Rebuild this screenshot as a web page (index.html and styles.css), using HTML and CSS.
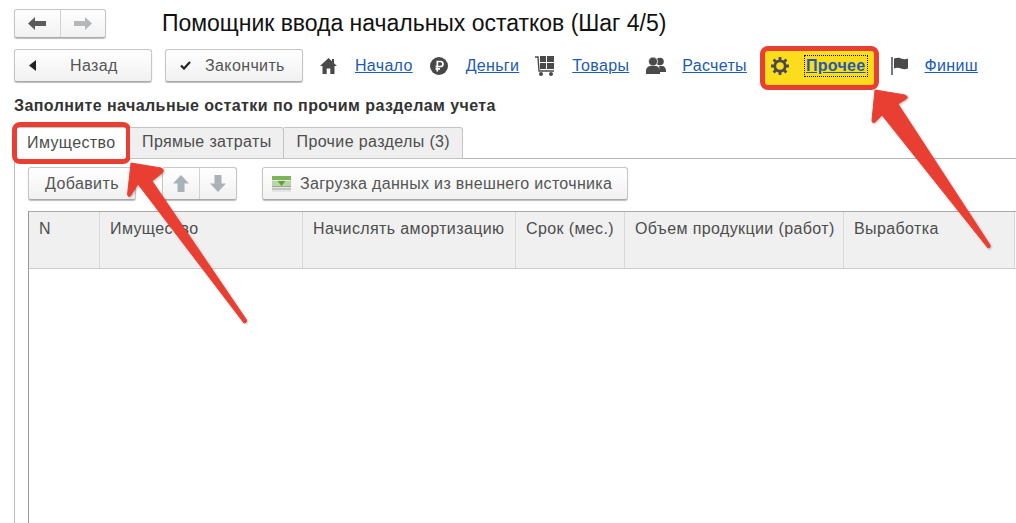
FILE: index.html
```html
<!DOCTYPE html>
<html lang="ru">
<head>
<meta charset="utf-8">
<title>Помощник ввода начальных остатков</title>
<link rel="stylesheet" href="styles.css">
</head>
<body>
<div class="page">
  <header class="title-row">
    <div class="btn-group hist">
      <span class="seg"><svg width="18" height="13" viewBox="0 0 18 13"><path d="M0 6.500 7 0V4H18V9H7V13Z" fill="#5c5c5c"/></svg></span>
      <span class="seg"><svg width="18" height="13" viewBox="0 0 18 13"><path d="M18 6.500 11 0V4H0V9H11V13Z" fill="#b4b8ba"/></svg></span>
    </div>
    <h1 class="title">Помощник ввода начальных остатков (Шаг 4/5)</h1>
  </header>

  <nav class="nav-row">
    <button class="btn wide back"><svg class="b-ico" width="7" height="11" viewBox="0 0 7 11"><path d="M7 0V11L0 5.500Z" fill="#222"/></svg><span class="back-label">Назад</span></button>
    <button class="btn wide finish"><svg class="b-ico" width="11" height="9" viewBox="0 0 11 9"><path d="M1 4.500 4 7.500 10 1" fill="none" stroke="#222" stroke-width="2.200"/></svg><span>Закончить</span></button>
    <div class="steps">
      <div class="step">
        <svg width="17" height="16" viewBox="0 0 17 16"><path d="M8.500 0 12 3.300V1H14V5.200L17 8H14.500V16H10.300V10.500H6.700V16H2.500V8H0Z" fill="#4a4a4a"/></svg>
        <a class="link" href="#">Начало</a>
      </div>
      <div class="step">
        <svg width="18" height="18" viewBox="0 0 18 18"><circle cx="9" cy="9" r="9" fill="#484848"/><path d="M7.300 14.500V4.500H10.500A2.500 2.500 0 0 1 10.500 9.500H5.500M5.500 11.800H10" fill="none" stroke="#fff" stroke-width="1.700"/></svg>
        <a class="link" href="#">Деньги</a>
      </div>
      <div class="step step-cart">
        <svg width="20" height="20" viewBox="0 0 20 20"><path d="M0 1H3L4 15H19" fill="none" stroke="#4a4a4a" stroke-width="1.400"/><path d="M5 0H11V6H5ZM12 0H19V6H12ZM5 7H11V13H5ZM12 7H19V13H12Z" fill="#4a4a4a"/><circle cx="6" cy="18" r="2" fill="#4a4a4a"/><circle cx="16" cy="18" r="2" fill="#4a4a4a"/></svg>
        <a class="link" href="#">Товары</a>
      </div>
      <div class="step step-people">
        <svg width="20" height="17" viewBox="0 0 20 17"><circle cx="14" cy="4.500" r="3.800" fill="#4a4a4a"/><path d="M13 9H16C18.500 9 20 11 20 14V15H14Z" fill="#4a4a4a"/><circle cx="7" cy="4.500" r="4.500" fill="#4a4a4a" stroke="#fff" stroke-width=".8"/><path d="M0 17V14C0 11 2 9 5 9H9C12 9 14 11 14 14V17Z" fill="#4a4a4a"/></svg>
        <a class="link" href="#">Расчеты</a>
      </div>
      <div class="step step-tight current">
        <svg width="18" height="18" viewBox="0 0 18 18"><circle cx="9" cy="9" r="5.200" fill="none" stroke="#4a4a4a" stroke-width="2.800"/><path d="M9 0V4M9 14V18M0 9H4M14 9H18M2.600 2.600 5.500 5.500M12.500 12.500 15.400 15.400M15.400 2.600 12.500 5.500M5.500 12.500 2.600 15.400" stroke="#4a4a4a" stroke-width="2.800"/></svg>
        <a class="link focus" href="#">Прочее</a>
      </div>
      <div class="step step-tight">
        <svg width="17" height="18" viewBox="0 0 17 18"><path d="M1 0V18" stroke="#4a4a4a" stroke-width="1.500"/><path d="M3 1.500C6 .5 9 .5 10 1.500 12 2.500 15 2.500 17 1.500V11.500C15 12.500 12 12.500 10 11.500 8 10.500 5 10.500 3 11.500Z" fill="#4a4a4a"/></svg>
        <a class="link" href="#">Финиш</a>
      </div>
    </div>
  </nav>

  <h2 class="subtitle">Заполните начальные остатки по прочим разделам учета</h2>

  <div class="tabs">
    <div class="tab active">Имущество</div>
    <div class="tab">Прямые затраты</div>
    <div class="tab">Прочие разделы (3)</div>
    <div class="tab-line"></div>
  </div>

  <section class="panel">
    <div class="toolbar">
      <button class="btn add">Добавить</button>
      <div class="btn-group moves">
        <span class="seg"><svg width="16" height="17" viewBox="0 0 16 17"><path d="M8 0 16 8.500H11.500V17H4.500V8.500H0Z" fill="#a8b2b8"/></svg></span>
        <span class="seg"><svg width="16" height="17" viewBox="0 0 16 17"><path d="M8 17 16 8.500H11.500V0H4.500V8.500H0Z" fill="#a8b2b8"/></svg></span>
      </div>
      <button class="btn load">
        <svg width="19" height="16" viewBox="0 0 19 16"><rect width="19" height="16" fill="#e4e6e2"/><rect width="19" height="4" fill="#7db35b"/><rect y="5" width="19" height="5" fill="#b9d7a5"/><path d="M0 10.500H19M0 13H19" stroke="#9ea39c" stroke-width="1"/><path d="M5.500 5H13.500L9.500 10Z" fill="#5fa23c"/></svg>
        <span>Загрузка данных из внешнего источника</span>
      </button>
    </div>
    <div class="grid-wrap">
      <div class="grid-head">
        <div class="cell">N</div>
        <div class="cell">Имущество</div>
        <div class="cell">Начислять амортизацию</div>
        <div class="cell">Срок (мес.)</div>
        <div class="cell">Объем продукции (работ)</div>
        <div class="cell">Выработка</div>
      </div>
    </div>
  </section>

  <svg class="arrows" width="1016" height="523" viewBox="0 0 1016 523">
    <path d="M131 163 161 168Q165 170 162 173L152 181 246.500 320Q247 323 244 323L138 184 131 195Q129 198 127.500 195Z" fill="#e93f33" stroke="#e93f33" stroke-linejoin="round"/>
    <path d="M875 90 905 95Q909 97 906 99L898 104 990 245Q991 248 988 248L882 115 875 122Q872 124 872 120Z" fill="#e93f33" stroke="#e93f33" stroke-linejoin="round"/>
  </svg>
</div>
</body>
</html>
```
FILE: styles.css
```css
* { box-sizing: border-box; }
html, body { margin: 0; padding: 0; }
body { background: #fff; font-family: "Liberation Sans", Arial, sans-serif; font-size: 16px; letter-spacing: .38px; color: #4d4d4d; }
.page { position: relative; width: 1016px; height: 523px; overflow: hidden; display: flex; flex-direction: column; }

.btn, .btn-group {
  border: 1px solid #c6c6c6;
  border-bottom-color: #a9a9a9;
  border-radius: 3px;
  background: linear-gradient(#ffffff, #f1f1f1);
  box-shadow: 0 1px 1px #bdbdbd;
}
.btn { font: inherit; letter-spacing: inherit; color: #555; padding: 0; display: flex; align-items: center; height: 33px; }
.btn-group { display: flex; }
.seg { display: flex; align-items: center; justify-content: center; }
.seg + .seg { border-left: 1px solid #d2d2d2; }

.title-row { display: flex; align-items: center; height: 30px; margin: 8px 0 0 14px; }
.hist { width: 92px; height: 29px; }
.hist .seg { width: 46px; }
.title { margin: 0 0 0 56px; font-size: 23px; letter-spacing: -.02px; font-weight: 400; color: #111; line-height: 30px; }

.nav-row { display: flex; align-items: center; height: 33px; margin: 11px 0 0 14px; }
.wide { width: 138px; }
.finish { margin-left: 13px; }
.b-ico { margin-left: 14px; flex: none; }
.back-label { margin-left: 34px; }
.finish span { margin-left: 14px; }

.steps { display: flex; align-items: center; margin-left: 17px; gap: 17px; }
.step { position: relative; display: flex; align-items: center; gap: 18px; }
.step-cart { margin-left: -1px; gap: 17px; }
.step-people { gap: 16px; }
.step-tight { gap: 17px; }
.link { color: #1d5bb5; text-decoration: underline; letter-spacing: .32px; }
.current { margin-left: 7px; margin-right: 8px; }
.current::before { content: ""; position: absolute; z-index: -1; left: -11px; right: -13px; top: -11px; bottom: -15px; background: #fcdc1c; border: 5px solid #e93f33; border-radius: 8px; }
.focus { font-weight: 700; outline: 1px dotted #111; outline-offset: 1px; }

.subtitle { margin: 15px 0 0 14px; font-size: 16px; line-height: 18px; font-weight: 700; letter-spacing: .42px; color: #333; }

.tabs { display: flex; align-items: stretch; height: 32px; margin: 12px 0 0 14px; }
.tab { position: relative; height: 32px; padding: 0 11px 2px 12px; display: flex; align-items: center; background: #efefef; border: 1px solid #c4c4c4; border-left: 0; border-radius: 0 3px 0 0; }
.tab + .tab + .tab { padding: 0 12px 2px 13px; }
.tab.active { background: #fff; width: 116px; padding-left: 13px; border-bottom: 0; }
.tab.active::after { content: ""; position: absolute; left: -2px; right: -2px; top: -6px; bottom: -5px; border: 5px solid #e93f33; border-radius: 8px; }
.tab-line { flex: 1; border-bottom: 1px solid #b5b5b5; }

.panel { flex: 1; margin-left: 14px; border-left: 1px solid #bbb; padding: 8px 0 0 13px; display: flex; flex-direction: column; }
.toolbar { display: flex; align-items: center; height: 33px; }
.add { width: 108px; justify-content: center; }
.moves { margin-left: 26px; width: 75px; height: 33px; }
.moves .seg { width: 36px; }
.moves .seg + .seg { width: 38px; }
.load { width: 366px; margin-left: 25px; gap: 9px; padding-left: 9px; letter-spacing: .32px; }

.grid-wrap { flex: 1; margin-top: 11px; border-left: 1px solid #999; border-top: 1px solid #aaa; }
.grid-head { display: grid; grid-template-columns: 71px 203px 213px 109px 219px 171px; height: 57px; border-bottom: 1px solid #ccc; }
.cell { background: #f0f0f0; border-right: 1px solid #d8d8d8; padding: 7px 10px 0; line-height: 20px; white-space: nowrap; }

.arrows { position: absolute; left: 0; top: 0; filter: drop-shadow(1px 1px 1px rgba(0,0,0,.25)); }
```
